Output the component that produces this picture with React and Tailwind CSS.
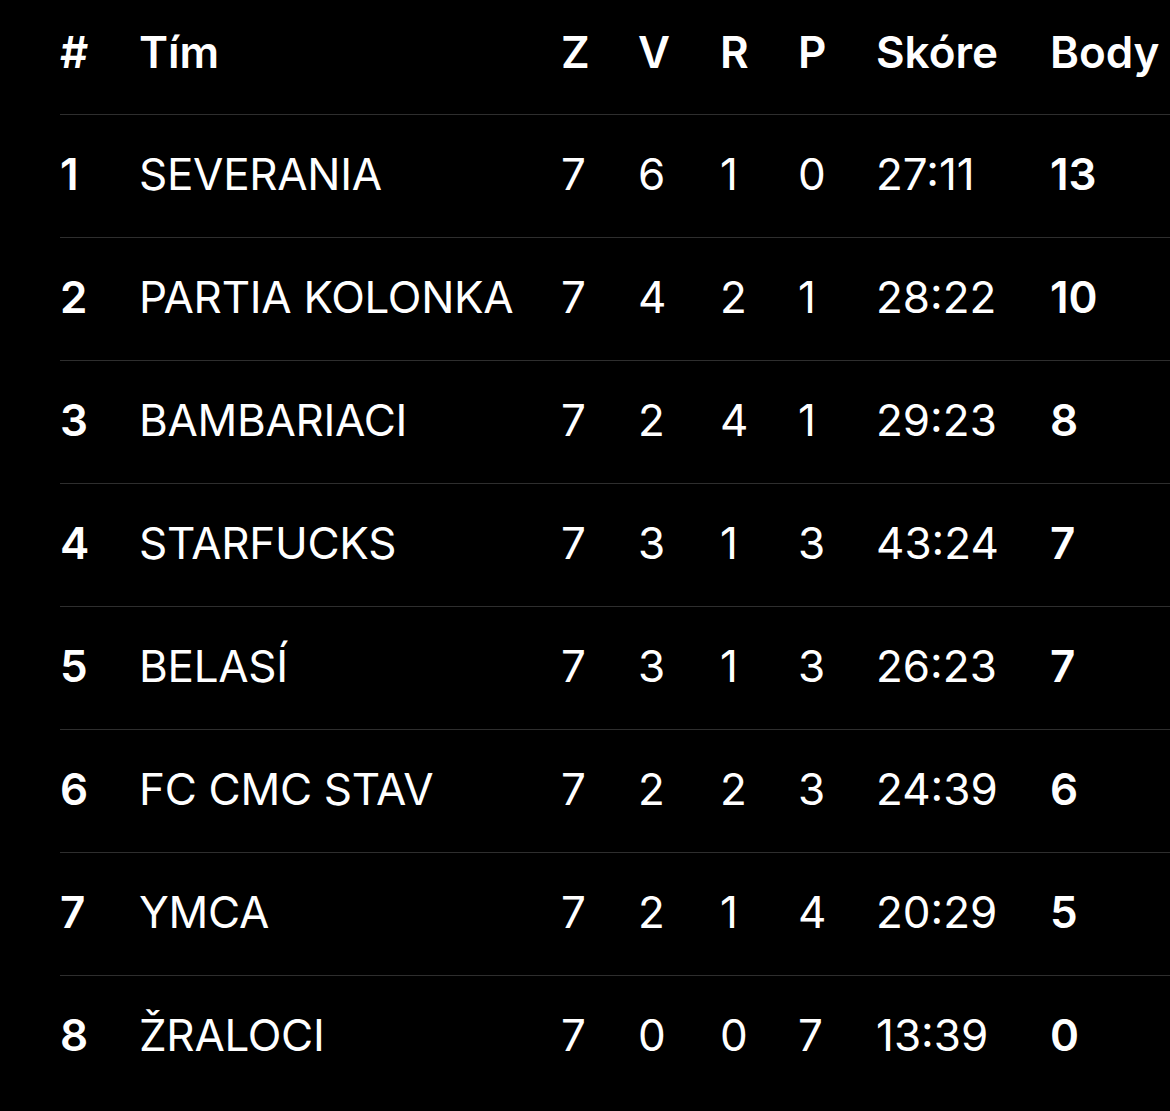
import React from "react";

const teams = [
  { pos: 1, name: "SEVERANIA", z: 7, v: 6, r: 1, p: 0, score: "27:11", pts: 13 },
  { pos: 2, name: "PARTIA KOLONKA", z: 7, v: 4, r: 2, p: 1, score: "28:22", pts: 10 },
  { pos: 3, name: "BAMBARIACI", z: 7, v: 2, r: 4, p: 1, score: "29:23", pts: 8 },
  { pos: 4, name: "STARFUCKS", z: 7, v: 3, r: 1, p: 3, score: "43:24", pts: 7 },
  { pos: 5, name: "BELASÍ", z: 7, v: 3, r: 1, p: 3, score: "26:23", pts: 7 },
  { pos: 6, name: "FC CMC STAV", z: 7, v: 2, r: 2, p: 3, score: "24:39", pts: 6 },
  { pos: 7, name: "YMCA", z: 7, v: 2, r: 1, p: 4, score: "20:29", pts: 5 },
  { pos: 8, name: "ŽRALOCI", z: 7, v: 0, r: 0, p: 7, score: "13:39", pts: 0 },
];

const cols = "grid grid-cols-[79px_422px_77px_82px_78px_78px_174px_1fr] items-center";

const App = () => {
  return (
    <div
      className="min-h-[1111px] w-full bg-black text-white pl-[60px] overflow-hidden"
      style={{ fontFamily: "Inter, 'Noto Sans', sans-serif" }}
    >
      {/* Header */}
      <div className={`${cols} h-[114px] pb-[10px] text-[44px] font-semibold`}>
        <div>#</div>
        <div>Tím</div>
        <div>Z</div>
        <div>V</div>
        <div>R</div>
        <div>P</div>
        <div>Skóre</div>
        <div>Body</div>
      </div>

      {/* Rows */}
      {teams.map((t) => (
        <div
          key={t.pos}
          className={`${cols} h-[123px] pb-[4px] border-t border-[#2e2e2e] text-[44px]`}
        >
          <div className="font-semibold">{t.pos}</div>
          <div className="tracking-[-0.3px]">{t.name}</div>
          <div>{t.z}</div>
          <div>{t.v}</div>
          <div>{t.r}</div>
          <div>{t.p}</div>
          <div>{t.score}</div>
          <div className="font-semibold">{t.pts}</div>
        </div>
      ))}
    </div>
  );
};

export default App;
